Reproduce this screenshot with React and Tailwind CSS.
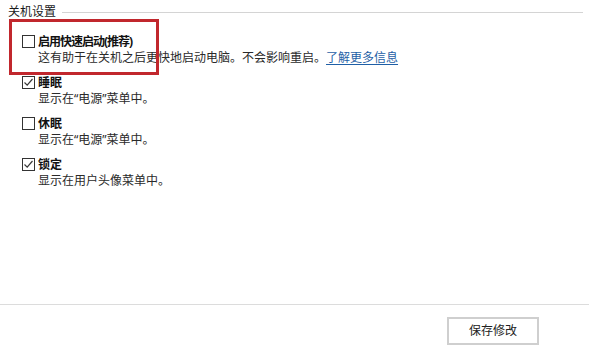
import React from 'react';

const options = [
  { label: '启用快速启动(推荐)', checked: false, tight: true, desc: '这有助于在关机之后更快地启动电脑。不会影响重启。', link: '了解更多信息' },
  { label: '睡眠', checked: true, desc: '显示在“电源”菜单中。' },
  { label: '休眠', checked: false, desc: '显示在“电源”菜单中。' },
  { label: '锁定', checked: true, desc: '显示在用户头像菜单中。' },
];

const CheckBox = ({ checked }) => (
  <div className="w-[13px] h-[13px] border border-[#333333] bg-white flex items-center justify-center shrink-0">
    {checked && (
      <svg width="11" height="11" viewBox="0 0 11 11">
        <path d="M1.5 5.5 L4.2 8.2 L9.5 2" fill="none" stroke="#3a3a3a" strokeWidth="1.2" />
      </svg>
    )}
  </div>
);

const OptionRow = ({ option }) => (
  <div className="flex mb-[9px]">
    <div className="w-[30px] flex justify-end pt-[1px] pr-[3px]">
      <CheckBox checked={option.checked} />
    </div>
    <div className="flex flex-col">
      <div className={`text-[12px] leading-[16px] font-bold text-[#111111] ${option.tight ? 'tracking-[-1px]' : ''}`}>
        {option.label}
      </div>
      <div className="text-[12px] leading-[16px] text-[#2a2a2a] whitespace-nowrap">
        {option.desc}
        {option.link && (
          <a className="text-[#1f5fa6] underline underline-offset-2" href="#">{option.link}</a>
        )}
      </div>
    </div>
  </div>
);

export default function App() {
  return (
    <div
      className="relative w-[589px] h-[350px] bg-white flex flex-col overflow-hidden"
      style={{ fontFamily: '"Noto Sans", "Noto Sans CJK SC", sans-serif' }}
    >
      <div className="flex items-center pl-[8px] pr-[6px] pt-[4px]">
        <span className="text-[12px] leading-[16px] text-[#1a1a1a]">关机设置</span>
        <div className="flex-1 h-px bg-[#d4d4d4] ml-[6px]" />
      </div>

      <div className="pl-[8px] pt-[14px]">
        {options.map((o) => (
          <OptionRow key={o.label} option={o} />
        ))}
      </div>

      <div className="flex-1" />

      <div className="h-px bg-[#dcdcdc]" />
      <div className="flex justify-end pr-[50px] pt-[12px] pb-[5px]">
        <button className="w-[92px] h-[28px] border-2 border-[#cfcfcf] bg-white text-[12px] text-[#222222]">
          保存修改
        </button>
      </div>

      <div className="absolute left-[9px] top-[19px] w-[150px] h-[56px] border-[3px] border-[#c1272d] pointer-events-none" />
    </div>
  );
}
